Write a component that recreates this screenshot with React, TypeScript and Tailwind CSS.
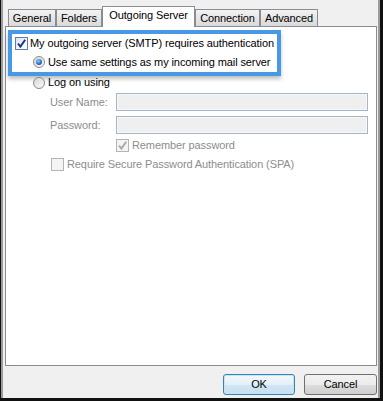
const font = { fontFamily: '"Liberation Sans", Arial, sans-serif' };

function Check({ checked, disabled }: { checked?: boolean; disabled?: boolean }) {
  return (
    <div
      className={`w-[13px] h-[13px] shrink-0 border flex items-center justify-center ${
        disabled
          ? 'border-[#b4b4b4] bg-[#f4f4f4]'
          : 'border-[#5a7fa8] bg-[linear-gradient(135deg,#dfe6ee,#ffffff)]'
      }`}
    >
      {checked && (
        <svg width="11" height="11" viewBox="0 0 11 11">
          <path
            d="M2 5.5 L4.4 8.6 L9.2 1.8"
            fill="none"
            stroke={disabled ? '#a8a8a8' : '#1b2f8a'}
            strokeWidth="1.9"
          />
        </svg>
      )}
    </div>
  );
}

function Radio({ selected }: { selected?: boolean }) {
  return (
    <div className="w-[12px] h-[12px] shrink-0 rounded-full border border-[#8a8a8a] bg-[linear-gradient(135deg,#d6d6d6,#fbfbfb)] flex items-center justify-center">
      {selected && (
        <div className="w-[6px] h-[6px] rounded-full bg-[radial-gradient(circle_at_40%_35%,#9ad0ff,#1f6fcb_55%,#0c3f8c)]" />
      )}
    </div>
  );
}

function Tab({ label, width, active }: { label: string; width: string; active?: boolean }) {
  if (active) {
    return (
      <div className={`${width} h-[21px] -mb-px relative z-10 bg-white border border-b-0 border-[#898c95] flex items-start justify-center pt-[3px]`}>
        {label}
      </div>
    );
  }
  return (
    <div className={`${width} h-[17px] border border-b-0 border-[#898c95] bg-[linear-gradient(#f2f2f2,#e6e6e6_50%,#d9d9d9)] flex items-center justify-center pt-px`}>
      {label}
    </div>
  );
}

export default function App() {
  return (
    <div className="w-[383px] h-[401px] bg-[#111111] pl-px pr-[3px] pb-[3px] flex" style={font}>
      <div className="flex-1 flex flex-col bg-[#f0f0f0] border-l-2 border-r-2 border-[#9b9b9b] pl-[2px] pr-px text-[11px] tracking-[-0.1px] text-black leading-none">
        <div className="h-[26px] flex items-end pl-[3px] shrink-0">
          <Tab label="General" width="w-[48px]" />
          <Tab label="Folders" width="w-[46px]" />
          <Tab label="Outgoing Server" width="w-[93px]" active />
          <Tab label="Connection" width="w-[65px]" />
          <Tab label="Advanced" width="w-[58px]" />
        </div>

        <div className="h-[340px] shrink-0 bg-white border border-[#898c95] flex flex-col">
          <div className="mt-[3px] ml-[2px] w-[273px] h-[46px] border-4 border-[#4799e6] shadow-[0_3px_4px_rgba(0,0,0,0.25)] flex flex-col">
            <div className="h-[18px] flex items-center pl-[3px] gap-[2px]">
              <Check checked />
              <span>My outgoing server (SMTP) requires authentication</span>
            </div>
            <div className="h-[20px] flex items-center pl-[21px] gap-[3px]">
              <Radio selected />
              <span>Use same settings as my incoming mail server</span>
            </div>
          </div>

          <div className="h-[13px] flex items-center pl-[27px] gap-[3px]">
            <Radio />
            <span>Log on using</span>
          </div>

          <div className="mt-[4px] h-[18px] flex items-center pl-[44px] text-[#8d8d8d]">
            <span className="w-[66px]">User Name:</span>
            <div className="w-[252px] h-[18px] border border-[#a7b6c7] bg-[#efefef] shadow-[inset_0_0_0_1px_#f7f7f7]" />
          </div>
          <div className="mt-[5px] h-[18px] flex items-center pl-[44px] text-[#8d8d8d]">
            <span className="w-[66px]">Password:</span>
            <div className="w-[252px] h-[18px] border border-[#a7b6c7] bg-[#efefef] shadow-[inset_0_0_0_1px_#f7f7f7]" />
          </div>

          <div className="mt-[5px] h-[13px] flex items-center pl-[110px] gap-[3px] text-[#8d8d8d]">
            <Check checked disabled />
            <span>Remember password</span>
          </div>
          <div className="mt-[6px] h-[13px] flex items-center pl-[45px] gap-[3px] text-[#8d8d8d]">
            <Check disabled />
            <span>Require Secure Password Authentication (SPA)</span>
          </div>
        </div>

        <div className="flex-1 flex justify-end items-start pt-[8px] gap-[9px]">
          <button className="w-[72px] h-[21px] rounded-[3px] border border-[#3c7fb1] bg-[linear-gradient(#f2f8fc,#e4f0f9_50%,#d2e6f4_50%,#c6def0)] shadow-[inset_0_0_0_1px_#c4e5f6]">
            OK
          </button>
          <button className="w-[73px] h-[21px] rounded-[3px] border border-[#707070] bg-[linear-gradient(#f2f2f2,#ebebeb_50%,#dddddd_50%,#cfcfcf)]">
            Cancel
          </button>
        </div>
      </div>
    </div>
  );
}
